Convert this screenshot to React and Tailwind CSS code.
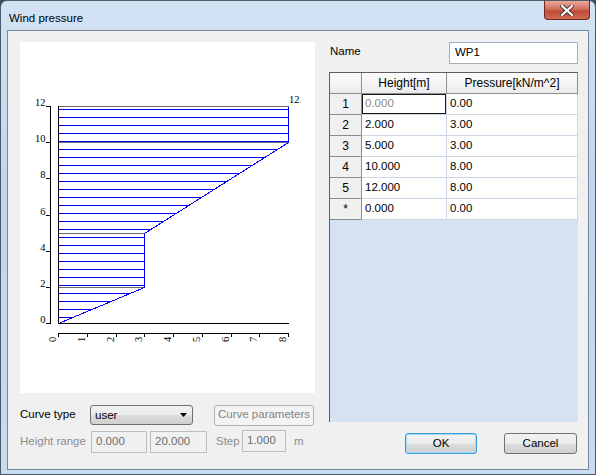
import React from 'react';

const X0 = 58, Y0 = 323, XS = 28.75, YS = 217 / 12;
// [height, pressure]
const profile = [[0, 0], [2, 3], [5, 3], [10, 8], [12, 8]];

const px = (p) => X0 + p * XS;
const py = (h) => Y0 - h * YS;

function pressureAt(h) {
  for (let i = 1; i < profile.length; i++) {
    const [h0, p0] = profile[i - 1];
    const [h1, p1] = profile[i];
    if (h <= h1) return h1 === h0 ? p1 : p0 + ((h - h0) / (h1 - h0)) * (p1 - p0);
  }
  return profile[profile.length - 1][1];
}

const hatch = [];
for (let y = 109; y <= 317; y += 8) hatch.push(y);

function Chart() {
  const blue = '#0000ff';
  const serif = { fontFamily: '"Liberation Serif", serif', fontSize: 10.5 };
  return (
    <svg className="block" width="295" height="351" viewBox="20 42 295 351">
      <g shapeRendering="crispEdges">
        {hatch.map((y) => (
          <rect key={y} x={X0} y={y} width={Math.round(px(pressureAt((Y0 - y) / YS))) - X0 + 1} height={1} fill={blue} />
        ))}
        {[12, 10, 5, 2].map((h) => (
          <rect key={h} x={X0} y={Math.round(py(h))} width={Math.round(px(h >= 10 ? 8 : 3)) - X0 + 1} height={1} fill="#6a6a6a" />
        ))}
      </g>
      <polyline
        points={profile.map(([h, p]) => `${Math.round(px(p)) + 0.5},${Math.round(py(h)) + 0.5}`).join(' ')}
        fill="none"
        stroke={blue}
        shapeRendering="crispEdges"
      />
      <g shapeRendering="crispEdges">
        <rect x={X0} y={106} width={1} height={Y0 - 105} fill="#000" />
        <rect x={X0} y={Y0} width={231} height={1} fill="#000" />
        <rect x={50} y={106} width={1} height={Y0 - 105} fill="#000" />
        <rect x={X0} y={333} width={231} height={1} fill="#000" />
      </g>
      {[0, 2, 4, 6, 8, 10, 12].map((h) => (
        <g key={h}>
          <rect x={46} y={Math.round(py(h))} width={5} height={1} fill="#000" />
          <text x={45.5} y={Math.round(py(h))} textAnchor="end" style={serif} fill="#000">{h}</text>
        </g>
      ))}
      <text x={289} y={103} style={serif} fill="#000">12</text>
      {[0, 1, 2, 3, 4, 5, 6, 7, 8].map((i) => {
        const x = Math.round(px(i));
        return (
          <g key={i}>
            <rect x={x} y={333} width={1} height={4} fill="#000" />
            <text x={x - 2} y={342} transform={`rotate(-90 ${x - 2} 342)`} style={serif} fill="#000">{i}</text>
          </g>
        );
      })}
    </svg>
  );
}

const rows = [
  ['1', '0.000', '0.00'],
  ['2', '2.000', '3.00'],
  ['3', '5.000', '3.00'],
  ['4', '10.000', '8.00'],
  ['5', '12.000', '8.00'],
  ['*', '0.000', '0.00'],
];

function Grid() {
  const head = 'h-[21px] border-r border-b border-[#8e8e8e] bg-gradient-to-b from-[#fdfdfd] to-[#ebebeb] flex items-center justify-center text-[12px]';
  return (
    <div className="h-[350px] border-l border-t border-[#5e5e5e] bg-[#d4e2f1] text-[11.5px]">
      <div className="flex">
        <div className={`${head} w-[32px]`} />
        <div className={`${head} w-[85px]`}>Height[m]</div>
        <div className={`${head} w-[131px]`}>Pressure[kN/m^2]</div>
      </div>
      {rows.map(([n, h, p], i) => (
        <div key={n} className="flex h-[21px]">
          <div className="w-[32px] border-r border-b border-[#8e8e8e] bg-[#f0f0f0] flex items-center justify-center text-[12px]">{n}</div>
          <div
            className={`w-[85px] border-r border-b border-[#cbd7e4] bg-white flex items-center pl-[3px] ${i === 0 ? 'text-[#8a8a8a] shadow-[inset_0_0_0_1px_#1a1a1a]' : ''}`}
          >
            {h}
          </div>
          <div className="w-[131px] border-r border-b border-[#cbd7e4] bg-white flex items-center pl-[3px]">{p}</div>
        </div>
      ))}
    </div>
  );
}

function DisabledBox({ value, w }) {
  return (
    <div className={`${w} h-[22px] border border-[#bdbdbd] bg-[#f0f0f0] text-[#6d6d6d] flex items-center pl-[4px]`}>{value}</div>
  );
}

function WinButton({ children, focused, w }) {
  return (
    <button
      className={`${w} h-[21px] rounded-[3px] border ${focused ? 'border-[#3c9ad6] shadow-[inset_0_0_0_1px_#9fdcf7]' : 'border-[#707070]'} bg-[linear-gradient(#f2f2f2_0%,#ebebeb_50%,#dddddd_51%,#cfcfcf_100%)] text-[11.5px] text-black flex items-center justify-center`}
    >
      {children}
    </button>
  );
}

export default function App() {
  return (
    <div className="w-[596px] h-[475px] bg-[#3e4e60] font-['Liberation_Sans',Arial,sans-serif] text-[11.5px] text-black whitespace-nowrap">
      <div className="w-full h-full rounded-t-[7px] border border-[#4c5a69] bg-[linear-gradient(#d3e3f4,#c0d5ec_40%,#c8dbef)] flex flex-col">
        <div className="h-[29px] flex items-start justify-between pl-[8px]">
          <div className="pt-[9px] text-[11.5px]">Wind pressure</div>
          <div className="mr-[5px] w-[46px] h-[19px] rounded-b-[4px] border border-t-0 border-[#6e2a22] bg-[linear-gradient(#e9a99a,#d2705f_45%,#c04a36_55%,#d06a55)] flex items-center justify-center">
            <svg width="14" height="11" viewBox="0 0 14 11">
              <path d="M2 1 L12 10 M12 1 L2 10" stroke="#4a3030" strokeWidth="4" strokeLinecap="square" />
              <path d="M2 1 L12 10 M12 1 L2 10" stroke="#fff" strokeWidth="2.2" strokeLinecap="square" />
            </svg>
          </div>
        </div>
        <div className="mx-[6px] h-[440px] border border-[#74879c] bg-[#f0f0f0] flex pl-[12px] pt-[11px] pr-[8px] gap-[14px]">
          <div className="w-[295px] flex flex-col">
            <div className="h-[351px] bg-white">
              <Chart />
            </div>
            <div className="mt-[11px] h-[22px] flex items-center">
              <span className="w-[70px]">Curve type</span>
              <div className="w-[103px] h-[20px] rounded-[3px] border border-[#707070] bg-[linear-gradient(#f2f2f2_0%,#ebebeb_50%,#dddddd_51%,#cfcfcf_100%)] flex items-center justify-between pl-[4px] pr-[5px]">
                <span className="pt-[2px]">user</span>
                <svg width="7" height="4" viewBox="0 0 7 4"><path d="M0 0 H7 L3.5 4 Z" fill="#000" /></svg>
              </div>
              <div className="ml-[21px] w-[100px] h-[21px] rounded-[3px] border border-[#adb2b5] bg-[#f4f4f4] text-[#838383] flex items-center justify-center">
                Curve parameters
              </div>
            </div>
            <div className="mt-[5px] flex items-center text-[#8d8d8d]">
              <span className="w-[71px]">Height range</span>
              <DisabledBox value="0.000" w="w-[56px]" />
              <div className="ml-[3px]"><DisabledBox value="20.000" w="w-[57px]" /></div>
              <span className="ml-[9px] w-[26px]">Step</span>
              <div className="-mt-[2px]"><DisabledBox value="1.000" w="w-[44px]" /></div>
              <span className="ml-[8px]">m</span>
            </div>
          </div>
          <div className="w-[249px] flex flex-col">
            <div className="h-[22px] flex justify-between">
              <span className="pl-[1px] pt-[1px]">Name</span>
              <div className="w-[129px] h-[22px] border border-[#abadb3] border-t-[#9fb4cb] bg-white flex items-center pl-[5px]">WP1</div>
            </div>
            <div className="mt-[8px]">
              <Grid />
            </div>
            <div className="mt-[11px] flex justify-end gap-[27px] pr-[1px]">
              <WinButton focused w="w-[72px]">OK</WinButton>
              <WinButton w="w-[73px]">Cancel</WinButton>
            </div>
          </div>
        </div>
      </div>
    </div>
  );
}
